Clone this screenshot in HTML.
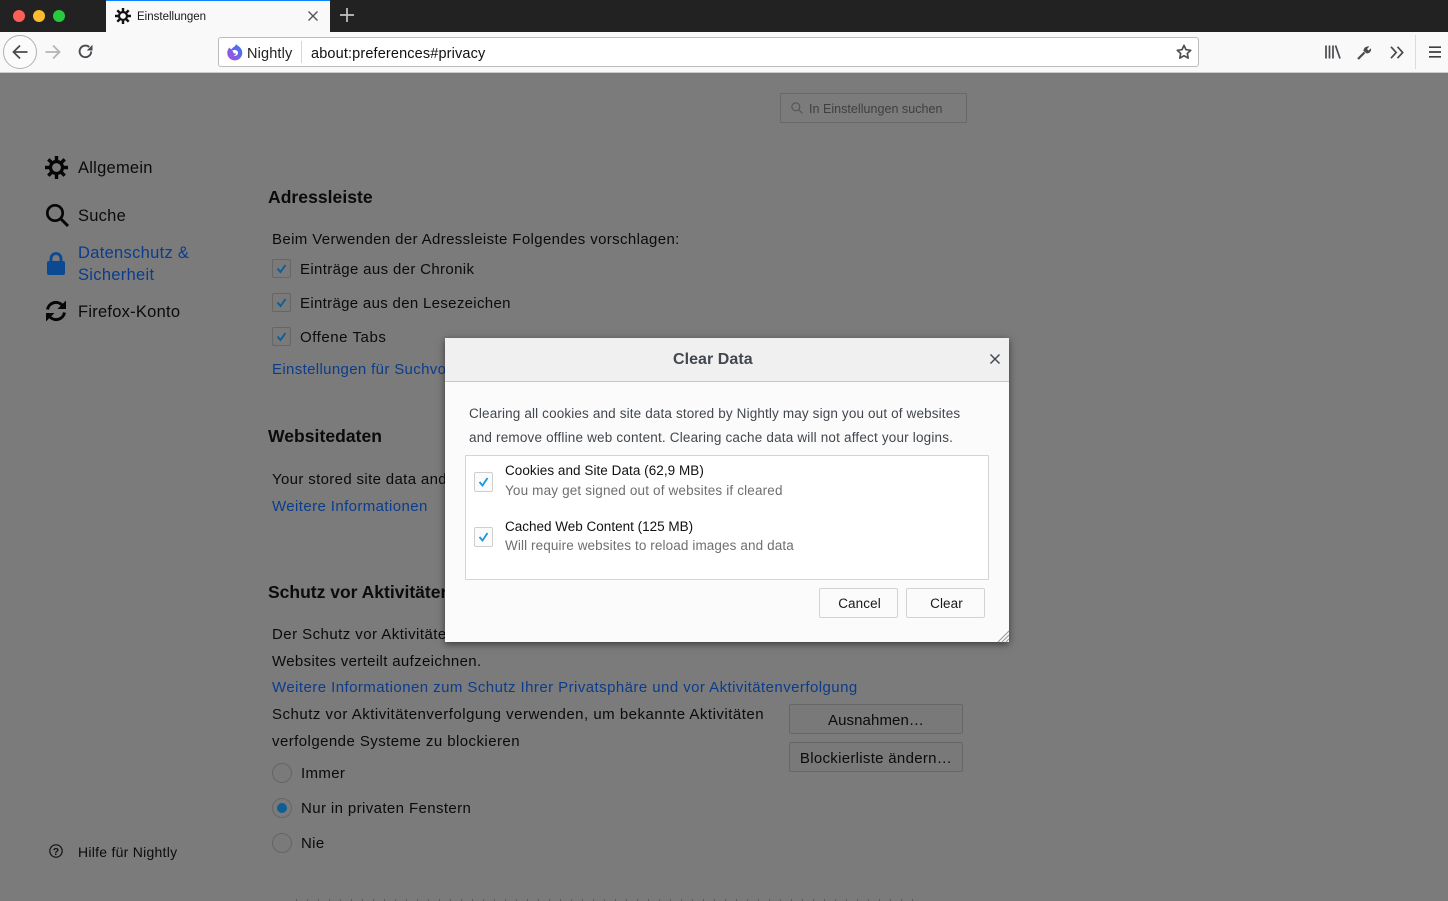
<!DOCTYPE html>
<html lang="de"><head><meta charset="utf-8"><title>Einstellungen</title>
<style>
html,body{margin:0;padding:0;width:1448px;height:901px;overflow:hidden;background:#7b7b7b}
body{position:relative;font-family:"Liberation Sans",sans-serif;color:#0c0c0d}
.t{position:absolute;white-space:nowrap;font-size:15px;line-height:20px;letter-spacing:.35px;color:#0b0b0c}
.l{color:#0b3c8c}
.h{font-weight:bold;font-size:17.5px;letter-spacing:.05px;color:#0b0b0c}
.n{font-size:16.5px;letter-spacing:.25px}
.box{position:absolute;box-sizing:border-box}
.cb{position:absolute;width:19px;height:19px;box-sizing:border-box;border:1px solid #666;border-radius:2px;background:#7a7a7a}
.cb svg,.dcb svg{position:absolute;left:0;top:0}
.dcb{position:absolute;width:19px;height:20px;box-sizing:border-box;border:1px solid #cfcfcf;border-radius:2px;background:#fbfbfb}
.r{position:absolute;width:20px;height:20px;box-sizing:border-box;border:1px solid #656565;border-radius:50%;background:#7a7a7a}
.pb{position:absolute;box-sizing:border-box;border:1px solid #666;border-radius:2px;background:#797979;text-align:center;font-size:15px;letter-spacing:.3px;color:#0b0b0c;white-space:nowrap;line-height:30px;height:30px}
.db{position:absolute;box-sizing:border-box;border:1px solid #d3d3d3;border-radius:2px;background:#fbfbfb;text-align:center;font-size:13.5px;letter-spacing:.1px;color:#18181a;line-height:29px;height:30px;top:588px;padding-left:2px}
.d{position:absolute;white-space:nowrap;font-size:13.5px;line-height:18px;letter-spacing:.15px}
svg{position:absolute;overflow:visible}
</style></head><body>

<!-- title bar -->
<div class="box" style="left:0;top:0;width:1448px;height:32px;background:#232222"></div>
<div class="box" style="left:13px;top:10px;width:12px;height:12px;border-radius:50%;background:#fb5f57"></div>
<div class="box" style="left:33px;top:10px;width:12px;height:12px;border-radius:50%;background:#fdbb2e"></div>
<div class="box" style="left:53px;top:10px;width:12px;height:12px;border-radius:50%;background:#28c83f"></div>
<div class="box" style="left:106px;top:0;width:224px;height:32px;background:#f9f9fa;border-top:1px solid #0a84ff"></div>
<svg style="left:115px;top:8px" width="16" height="16" viewBox="0 0 16 16"><circle cx="8" cy="8" r="4" fill="none" stroke="#111" stroke-width="2.2"/><g stroke="#111" stroke-width="2.4"><path d="M8 0v3M8 13v3M0 8h3M13 8h3M2.3 2.3l2.2 2.2M11.5 11.5l2.2 2.2M2.3 13.7l2.2-2.2M11.5 4.5l2.2-2.2"/></g></svg>
<div class="t" style="left:137px;top:7px;font-size:11.5px;letter-spacing:0;color:#18181a">Einstellungen</div>
<svg style="left:308px;top:11px" width="10" height="10" viewBox="0 0 10 10"><path d="M.5.5l9 9M9.5.5l-9 9" stroke="#555" stroke-width="1.4"/></svg>
<svg style="left:340px;top:8px" width="14" height="14" viewBox="0 0 14 14"><path d="M7 0v14M0 7h14" stroke="#c4c4c4" stroke-width="1.7"/></svg>

<!-- toolbar -->
<div class="box" style="left:0;top:32px;width:1448px;height:41px;background:#f9f9fa;border-bottom:1px solid #ccc"></div>
<div class="box" style="left:3px;top:35px;width:34px;height:34px;border-radius:50%;border:1px solid #b1b1b3;background:#fbfbfb"></div>
<svg style="left:12px;top:44px" width="16" height="16" viewBox="0 0 16 16"><path d="M15.5 8H1.5M8 1.5L1.5 8 8 14.5" fill="none" stroke="#4a4a4f" stroke-width="1.8"/></svg>
<svg style="left:45px;top:44px" width="16" height="16" viewBox="0 0 16 16"><path d="M.5 8h14M8 1.5L14.5 8 8 14.5" fill="none" stroke="#b4b4b6" stroke-width="1.8"/></svg>
<svg style="left:78px;top:44px" width="15" height="15" viewBox="0 0 15 15"><path d="M13.2 7.5A5.8 5.8 0 1 1 11.2 3" fill="none" stroke="#4a4a4f" stroke-width="1.9"/><path d="M14.5.8v5.7H8.8z" fill="#4a4a4f"/></svg>

<div class="box" style="left:218px;top:37px;width:981px;height:30px;background:#fff;border:1px solid #bcbcbc;border-radius:3px"></div>
<svg style="left:227px;top:44px" width="16" height="16" viewBox="0 0 16 16"><defs><linearGradient id="g" x1="0" y1="1" x2="1" y2="0"><stop offset="0" stop-color="#b14ce0"/><stop offset="1" stop-color="#2f7bf0"/></linearGradient></defs><path d="M9 0c1 1.500 3 2 4.500 4A7.500 7.500 0 1 1 2.500 3.500L4 5.500 6 3.500C7 3 8.500 2 9 0z" fill="url(#g)"/><path d="M5 6.800c2-1.300 5.500-1.200 6 1.700.3 2.500-2.500 4-4.500 3.300 1.500-.3 2.600-1.300 2.500-2.500-1 .7-2.200 .3-2.500-.5-.3-1-.8-1.700-1.500-2z" fill="#fff"/></svg>
<div class="t" style="left:247px;top:44px;font-size:14.5px;letter-spacing:.15px;color:#222">Nightly</div>
<div class="box" style="left:301px;top:41px;width:1px;height:22px;background:#d6d6d6"></div>
<div class="t" style="left:311px;top:44px;font-size:14.5px;letter-spacing:.14px;color:#111">about:preferences#privacy</div>
<svg style="left:1176px;top:44px" width="16" height="16" viewBox="0 0 16 16"><path d="M8 1.4l2 4.3 4.7.6-3.4 3.2.9 4.6L8 11.8l-4.2 2.3.9-4.6L1.300 6.300l4.700-.6z" fill="none" stroke="#4f4f53" stroke-width="1.7" stroke-linejoin="round"/></svg>

<svg style="left:1325px;top:45px" width="16" height="14" viewBox="0 0 16 14"><path d="M1 .5v13M4.500.5v13M8 .5v13M10.500.5l4.500 13" fill="none" stroke="#4a4a4f" stroke-width="1.700"/></svg>
<svg style="left:1357px;top:45px" width="15" height="15" viewBox="0 0 15 15"><path d="M1 14L7.500 7.500" stroke="#4a4a4f" stroke-width="2.200" fill="none"/><path d="M6.500 6c0-3 2.500-5 5.800-4.500L10 4l1.500 1.500L14 3.200c.6 3-1.500 5.300-4.500 5.200z" fill="#4a4a4f"/></svg>
<svg style="left:1390px;top:46px" width="14" height="13" viewBox="0 0 14 13"><path d="M1 .8l5.200 5.700L1 12.200M7.500.8l5.200 5.700-5.200 5.700" fill="none" stroke="#4a4a4f" stroke-width="1.700"/></svg>
<div class="box" style="left:1415px;top:35px;width:1px;height:34px;background:#dcdcdc"></div>
<svg style="left:1429px;top:46px" width="12" height="12" viewBox="0 0 12 12"><path d="M0 1.200h12M0 6h12M0 10.800h12" stroke="#3f3f43" stroke-width="1.700"/></svg>

<!-- search -->
<div class="box" style="left:780px;top:93px;width:187px;height:30px;border:1px solid #686868;border-radius:1px"></div>
<svg style="left:791px;top:102px" width="12" height="12" viewBox="0 0 12 12"><circle cx="4.800" cy="4.800" r="4" fill="none" stroke="#555" stroke-width="1.100"/><path d="M7.700 7.700L11.500 11.500" stroke="#555" stroke-width="1.100"/></svg>
<div class="t" style="left:809px;top:99px;font-size:12.500px;letter-spacing:.03px;color:#3f3f42">In Einstellungen suchen</div>

<!-- sidebar -->
<svg style="left:45px;top:156px" width="23" height="23" viewBox="0 0 23 23"><circle cx="11.500" cy="11.500" r="6" fill="none" stroke="#060606" stroke-width="3.200"/><path d="M11.500 0v4.500M11.500 18.500V23M0 11.500h4.500M18.500 11.500H23M3.300 3.300l3.200 3.200M16.500 16.500l3.200 3.200M3.300 19.700l3.200-3.200M16.500 6.500l3.200-3.200" stroke="#060606" stroke-width="3.400"/></svg>
<div class="t n" style="left:78px;top:158px">Allgemein</div>
<svg style="left:45px;top:203px" width="24" height="24" viewBox="0 0 24 24"><circle cx="10" cy="10" r="7.700" fill="none" stroke="#060606" stroke-width="2.700"/><path d="M15.500 15.500L23 23" stroke="#060606" stroke-width="3"/></svg>
<div class="t n" style="left:78px;top:206px">Suche</div>
<svg style="left:47px;top:252px" width="18" height="23" viewBox="0 0 18 23"><path d="M4 10V6.500a5 5 0 0 1 10 0V10" fill="none" stroke="#0b4a93" stroke-width="2.800"/><rect x="0" y="9" width="18" height="14" rx="2" fill="#0b4a93"/></svg>
<div class="t n l" style="left:78px;top:243px;letter-spacing:.3px">Datenschutz &amp;</div>
<div class="t n l" style="left:78px;top:265px;letter-spacing:.3px">Sicherheit</div>
<svg style="left:45px;top:300px" width="22" height="22" viewBox="0 0 22 22"><path d="M2.500 9.500A8.500 8.500 0 0 1 17 5" fill="none" stroke="#060606" stroke-width="3"/><path d="M21 .5V9h-8.500z" fill="#060606"/><path d="M19.500 12.500A8.500 8.500 0 0 1 5 17" fill="none" stroke="#060606" stroke-width="3"/><path d="M1 21.500V13h8.500z" fill="#060606"/></svg>
<div class="t n" style="left:78px;top:302px">Firefox-Konto</div>
<svg style="left:49px;top:844px" width="14" height="14" viewBox="0 0 14 14"><circle cx="7" cy="7" r="6.200" fill="none" stroke="#111" stroke-width="1.200"/><text x="7" y="10.800" text-anchor="middle" font-size="10.500" font-family="Liberation Sans" font-weight="bold" fill="#111">?</text></svg>
<div class="t" style="left:78px;top:842px;font-size:14px;letter-spacing:.26px">Hilfe für Nightly</div>

<!-- main -->
<div class="t h" style="left:268px;top:187px">Adressleiste</div>
<div class="t" style="left:272px;top:230px;letter-spacing:.37px">Beim Verwenden der Adressleiste Folgendes vorschlagen:</div>
<div class="cb" style="left:272px;top:259px"><svg width="17" height="17" viewBox="0 0 17 17"><path d="M4.500 8.500l3 3.500 5-7" fill="none" stroke="#0c5e94" stroke-width="1.800"/></svg></div>
<div class="t" style="left:300px;top:260px">Einträge aus der Chronik</div>
<div class="cb" style="left:272px;top:293px"><svg width="17" height="17" viewBox="0 0 17 17"><path d="M4.500 8.500l3 3.500 5-7" fill="none" stroke="#0c5e94" stroke-width="1.800"/></svg></div>
<div class="t" style="left:300px;top:294px;letter-spacing:.32px">Einträge aus den Lesezeichen</div>
<div class="cb" style="left:272px;top:327px"><svg width="17" height="17" viewBox="0 0 17 17"><path d="M4.500 8.500l3 3.500 5-7" fill="none" stroke="#0c5e94" stroke-width="1.800"/></svg></div>
<div class="t" style="left:300px;top:328px;letter-spacing:.55px">Offene Tabs</div>
<div class="t l" style="left:272px;top:360px">Einstellungen für Suchvorschläge ändern</div>

<div class="t h" style="left:268px;top:426px">Websitedaten</div>
<div class="t" style="left:272px;top:470px">Your stored site data and cache are currently using</div>
<div class="t l" style="left:272px;top:497px;letter-spacing:.4px">Weitere Informationen</div>

<div class="t h" style="left:268px;top:582px;letter-spacing:0">Schutz vor Aktivitätenverfolgung</div>
<div class="t" style="left:272px;top:625px;letter-spacing:.45px">Der Schutz vor Aktivitätenverfolgung blockiert</div>
<div class="t" style="left:272px;top:652px;letter-spacing:.35px">Websites verteilt aufzeichnen.</div>
<div class="t l" style="left:272px;top:678px;letter-spacing:.44px">Weitere Informationen zum Schutz Ihrer Privatsphäre und vor Aktivitätenverfolgung</div>
<div class="t" style="left:272px;top:705px;letter-spacing:.5px">Schutz vor Aktivitätenverfolgung verwenden, um bekannte Aktivitäten</div>
<div class="t" style="left:272px;top:732px;letter-spacing:.44px">verfolgende Systeme zu blockieren</div>
<div class="pb" style="left:789px;top:704px;width:174px;line-height:31px;letter-spacing:.1px">Ausnahmen…</div>
<div class="pb" style="left:789px;top:742px;width:174px;line-height:31px">Blockierliste ändern…</div>
<div class="r" style="left:272px;top:763px"></div>
<div class="t" style="left:301px;top:764px">Immer</div>
<div class="r" style="left:272px;top:798px"><div class="box" style="left:4px;top:4px;width:10px;height:10px;border-radius:50%;background:#0c5e94"></div></div>
<div class="t" style="left:301px;top:799px;letter-spacing:.39px">Nur in privaten Fenstern</div>
<div class="r" style="left:272px;top:833px"></div>
<div class="t" style="left:301px;top:834px">Nie</div>
<div class="box" style="left:296px;top:899px;width:620px;height:2px;background:repeating-linear-gradient(90deg,#3a3a3a 0 1px,#7b7b7b 1px 11px);opacity:.45"></div>

<!-- dialog -->
<div class="box" style="left:445px;top:338px;width:564px;height:304px;background:#fbfbfb;box-shadow:0 2px 7px rgba(0,0,0,.55)"></div>
<div class="box" style="left:445px;top:338px;width:564px;height:44px;background:#f0f0f1;border-bottom:1px solid #c8c8c8"></div>
<div class="t" style="left:673px;top:350px;font-size:16px;font-weight:bold;letter-spacing:.05px;color:#43484f">Clear Data</div>
<svg style="left:990px;top:354px" width="10" height="10" viewBox="0 0 10 10"><path d="M.5.500l9 9M9.500.500l-9 9" stroke="#444b52" stroke-width="1.500"/></svg>
<div class="d" style="left:469px;top:405px;color:#42474e;letter-spacing:.145px">Clearing all cookies and site data stored by Nightly may sign you out of websites</div>
<div class="d" style="left:469px;top:429px;color:#42474e;letter-spacing:.185px">and remove offline web content. Clearing cache data will not affect your logins.</div>
<div class="box" style="left:465px;top:455px;width:524px;height:125px;background:#fff;border:1px solid #d4d4d4;border-radius:1px"></div>
<div class="dcb" style="left:474px;top:472px"><svg width="17" height="18" viewBox="0 0 17 18"><path d="M4.500 9l3 3.500 5-7.500" fill="none" stroke="#1c95dc" stroke-width="1.800"/></svg></div>
<div class="d" style="left:505px;top:462px;color:#111;letter-spacing:.05px">Cookies and Site Data (62,9 MB)</div>
<div class="d" style="left:505px;top:482px;color:#6f6f72;letter-spacing:.16px">You may get signed out of websites if cleared</div>
<div class="dcb" style="left:474px;top:527px"><svg width="17" height="18" viewBox="0 0 17 18"><path d="M4.500 9l3 3.500 5-7.500" fill="none" stroke="#1c95dc" stroke-width="1.800"/></svg></div>
<div class="d" style="left:505px;top:518px;color:#111;letter-spacing:0">Cached Web Content (125 MB)</div>
<div class="d" style="left:505px;top:537px;color:#6f6f72;letter-spacing:.11px">Will require websites to reload images and data</div>
<div class="db" style="left:819px;width:79px">Cancel</div>
<div class="db" style="left:906px;width:79px">Clear</div>
<svg style="left:997px;top:630px" width="12" height="12" viewBox="0 0 12 12"><path d="M1 12L12 1M5 12l7-7M9 12l3-3" stroke="#9a9a9a" stroke-width="1.100"/></svg>
</body></html>
